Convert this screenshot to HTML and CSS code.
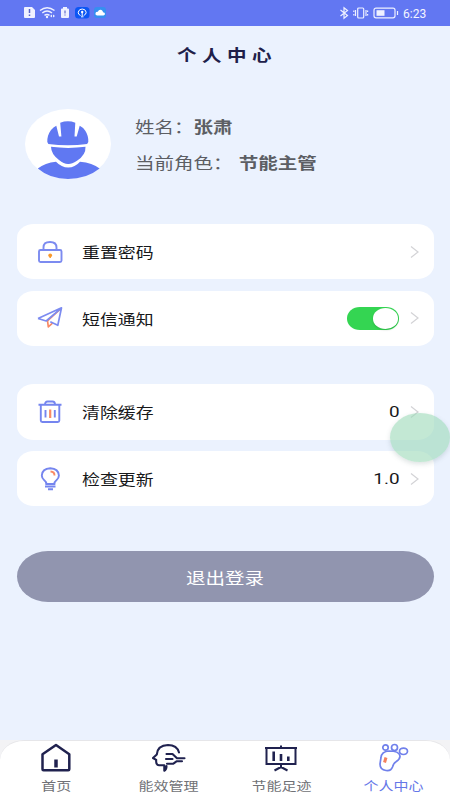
FILE: index.html
```html
<!DOCTYPE html>
<html lang="zh-CN">
<head>
<meta charset="utf-8">
<title>个人中心</title>
<link rel="stylesheet" href="styles.css">
</head>
<body>
<div class="screen">
  <header class="status">
    <svg class="status-left" width="86" height="14" viewBox="0 0 86 14">
      <path d="M1 1h7l3 3v7q0 1-1 1H1q-1 0-1-1V2q0-1 1-1z" fill="#f0f2ff"/>
      <path d="M5.5 3v4M5.500 8.500v1.500" stroke="#5964c8" stroke-width="1.500"/>
      <g fill="none" stroke="#eef1ff" stroke-width="1.500"><path d="M16 4.500Q23 -1 30.500 4.500M18.300 7Q23 3.200 28 7M20.500 9.300Q23 7.500 25.500 9.300"/></g>
      <circle cx="23" cy="11" r="1.200" fill="#eef1ff"/><path d="M26 10l2-1.500v3zM31 10l-2-1.500v3z" fill="#eef1ff"/>
      <path d="M39 1h4v1.500h1q1 0 1 1V11q0 1-1 1h-6q-1 0-1-1V3.500q0-1 1-1h1z" fill="#eef1ff"/>
      <path d="M41 4.500v3M41 8.500v1" stroke="#626ccc" stroke-width="1.200"/>
      <rect x="51" y="1" width="14.500" height="11.500" rx="3.500" fill="#0b56f4"/>
      <path d="M56.500 9.500Q54 8.500 54.200 6.200 55 3 58.200 3q3.300 0 4 3.200 0 2.300-2.500 3.300M57 10.800h2.500M58.200 6v4" fill="none" stroke="#fff" stroke-width="1"/><circle cx="58.200" cy="6" r="1.200" fill="#fff"/>
      <rect x="70" y="1" width="12" height="11" rx="3" fill="#368ff0"/>
      <path d="M73 9.500q-2-.5-1.500-2.500.6-1.300 2.300-1.200Q75 3 77.500 4q1.500.7 1.500 2.200 2 .2 2 1.800-.2 1.300-1.600 1.500z" fill="#fff"/>
    </svg>
    <div class="status-right">
      <svg width="62" height="14" viewBox="0 0 62 14" fill="none" stroke="#eef1ff" stroke-width="1.200">
        <path d="M1.500 4l7 5.500L5 12.300V1.700l3.500 2.800L1.500 10"/>
        <rect x="18.700" y="2" width="6" height="10" rx="1"/><path d="M16.500 4v6M27 4v6M14.800 4.500v1.500M14.800 8v1.500M28.600 4.500v1.500M28.600 8v1.500"/>
        <rect x="35" y="2.200" width="21" height="9.600" rx="2"/><rect x="37.500" y="4.200" width="8" height="5.600" fill="#eef1ff" stroke="none"/><path d="M58.500 5v4"/>
      </svg>
      <span class="clock">6:23</span>
    </div>
  </header>

  <h1 class="title"><span>个人中心</span></h1>

  <section class="profile">
    <svg class="avatar" width="86" height="70" viewBox="0 0 86 70">
      <ellipse cx="43" cy="35" rx="43" ry="35" fill="#fff"/>
      <g fill="#6078f2">
        <path d="M22.300 33Q22 26.500 26 21q2.400-3 5.300-4.200L34 27.500h2.400L35.200 13.700Q43 10.800 50.300 13.700L49.500 27.500h2.200l3-10.700q3.300 1.500 5.600 5 3.300 5 3 11.200l-1.200 2Q43 37.500 23.400 35z"/>
        <path d="M26 37.800Q43 40 60.500 37.800q.5 8.200-8.500 14Q46 55.500 43 55q-4.200-.2-9-4-8-6-8-13.200z"/>
        <path d="M12.800 59.500Q20 53.800 31 52.800q5.500 5.800 12.200 5.800T55 52.800q12.500 1 19.600 6.700Q61.500 70 43 70 25 70 12.800 59.500z"/>
      </g>
    </svg>
    <div class="info">
      <p><span class="wide">姓名：<b>张肃</b></span></p>
      <p><span class="wide">当前角色：<b class="role">节能主管</b></span></p>
    </div>
  </section>

  <main class="settings">
    <div class="group">
      <div class="row">
        <svg class="icon" width="28" height="26" viewBox="0 0 28 26" fill="none" stroke="#7c8bf0" stroke-width="1.900">
          <rect x="3" y="11" width="22.500" height="12" rx="1.500"/><path d="M7.500 11V8.500q0-5.500 6.500-5.500t6.500 5.500V11"/><circle cx="14.200" cy="16.300" r="1.900" fill="#f99a2c" stroke="none"/><path d="M14.200 16v3" stroke="#f99a2c" stroke-width="1.500"/>
        </svg>
        <span class="label wide">重置密码</span>
        <svg class="chevron" width="9" height="14" viewBox="0 0 9 14"><path d="M1 1.500l7 5.500-7 5.500"/></svg>
      </div>
      <div class="row">
        <svg class="icon" width="28" height="26" viewBox="0 0 28 26" fill="none" stroke-width="1.700" stroke-linejoin="round">
          <path d="M11.500 15.500l.8 6.300 4.200-3.600M25 3.500L12 15.500" stroke="#f98a65"/><path d="M2 13.500L25.500 2.800l-3.700 17.500-7.500-3.500M2 13.500l8.200 2.500L25.500 2.800" stroke="#7c8bf0"/>
        </svg>
        <span class="label wide">短信通知</span>
        <span class="switch"><i></i></span>
        <svg class="chevron" width="9" height="14" viewBox="0 0 9 14"><path d="M1 1.500l7 5.500-7 5.500"/></svg>
      </div>
    </div>
    <div class="group">
      <div class="row">
        <svg class="icon" width="28" height="26" viewBox="0 0 28 26" fill="none" stroke="#7585ef" stroke-width="1.900">
          <path d="M2.500 5.800h23M9 5.500q0-3 2.500-3h5q2.500 0 2.500 3M4.800 6v15.500q0 1.500 1.500 1.500h15.500q1.500 0 1.500-1.500V6M9.500 11v7.500M18.800 11v7.500"/><path d="M14.200 10.500v8.500" stroke="#f98a65" stroke-width="2.200"/>
        </svg>
        <span class="label wide">清除缓存</span>
        <span class="value wide">0</span>
        <svg class="chevron" width="9" height="14" viewBox="0 0 9 14"><path d="M1 1.500l7 5.500-7 5.500"/></svg>
      </div>
      <div class="row">
        <svg class="icon" width="28" height="26" viewBox="0 0 28 26" fill="none" stroke="#7585ef" stroke-width="1.900">
          <path d="M10.300 18q0-2.300-2-3.800Q5.800 12.200 5.800 9.500q.4-6.900 8.500-7.200 8.200.3 8.600 7.200 0 2.700-2.500 4.700-2 1.500-2 3.800zM9 20.500h10.500M12 23.300h5"/><path d="M14.500 5.500q4 .2 4 4" stroke="#f98a65"/>
        </svg>
        <span class="label wide">检查更新</span>
        <span class="value wide">1.0</span>
        <svg class="chevron" width="9" height="14" viewBox="0 0 9 14"><path d="M1 1.500l7 5.500-7 5.500"/></svg>
      </div>
    </div>
  </main>

  <button class="logout"><span>退出登录</span></button>

  <div class="float-ball"></div>

  <div class="tabs-wrap">
    <nav class="tabs">
      <a class="tab">
        <svg width="34" height="30" viewBox="0 0 34 30" fill="none" stroke="#20224f" stroke-width="2.500" stroke-linejoin="round"><path d="M3.500 11.300L17 2l13.300 9.300v15q0 1-1 1H4.500q-1 0-1-1z"/><path d="M17 16.500v8" stroke-width="3.500"/></svg>
        <span>首页</span>
      </a>
      <a class="tab">
        <svg width="34" height="30" viewBox="0 0 34 30" fill="none" stroke="#20224f" stroke-width="2.100" stroke-linecap="round" stroke-linejoin="round"><path d="M27 9.500Q25 2 16 2 5.500 2.300 4.800 11.500L1 15l3.200 1.800q-.5 5.200 2.800 5.500h5.300v5.500q2.200-1.300 2.200-4.800M14.500 11h6l4.500 4.300h7.500M14 16h6.500M15 20.800h6l3.500-2.500h5.500"/></svg>
        <span>能效管理</span>
      </a>
      <a class="tab">
        <svg width="34" height="30" viewBox="0 0 34 30" fill="none" stroke="#20224f" stroke-width="2"><path d="M1 5h32M2.500 5v16h29V5M17 2.500V5M17 21v3M10.500 27.500L17 24l6.500 3.500"/><path d="M9.700 8.500V18M17 11v7M24.300 13.500V18" stroke-width="2.600"/></svg>
        <span>节能足迹</span>
      </a>
      <a class="tab active">
        <svg width="34" height="30" viewBox="0 0 34 30" fill="none" stroke="#7080eb" stroke-width="1.700"><path d="M4 14.500Q4.500 8.500 12 8q10.500 0 11 5 .2 3-4 5.800-2.500 1.500-3.500 5.200-1.500 4.300-6.500 3.500-6-.7-6-6.500z"/><circle cx="8.500" cy="4.500" r="2.700"/><circle cx="17.500" cy="4.500" r="3"/><ellipse cx="26.500" cy="8.300" rx="4" ry="3.200"/><path d="M9 14.500L7.500 19.500" stroke="#f4805e" stroke-width="3"/></svg>
        <span>个人中心</span>
      </a>
    </nav>
  </div>
</div>
</body>
</html>
```
FILE: styles.css
```css
* { box-sizing: border-box; }
body { margin: 0; font-family: Roboto, "Noto Sans CJK SC", sans-serif; }
h1, p { margin: 0; }

.screen {
  position: relative;
  width: 450px;
  height: 800px;
  overflow: hidden;
  display: flex;
  flex-direction: column;
  background: #ebf2fe;
}

.status {
  height: 26px;
  flex: none;
  display: flex;
  justify-content: space-between;
  align-items: center;
  padding: 0 23px 0 24px;
  background: #6277f2;
}
.status-left, .status-right svg { display: block; }
.status-right { display: flex; align-items: center; gap: 2px; }
.clock { width: 24px; font-size: 12px; line-height: 14px; color: #f3f5ff; white-space: nowrap; margin-top: 2px; }

.title {
  height: 60px;
  flex: none;
  text-align: center;
  font-size: 16px;
  line-height: 60px;
  font-weight: 700;
  color: #20204a;
}
.title span { display: inline-block; letter-spacing: 4.500px; margin-right: -4.500px; transform: scaleX(1.220); }

.wide { display: inline-block; transform: scaleX(1.220); transform-origin: left center; white-space: nowrap; }

.profile { display: flex; gap: 24px; margin: 23px 0 0 25px; height: 70px; flex: none; }
.avatar { flex: none; }
.info { font-size: 16px; line-height: 36px; color: #5c5e64; padding-top: 1px; }
.role { margin-left: 5px; }

.settings { padding: 0 16.500px 0 17px; margin-top: 45px; display: flex; flex-direction: column; gap: 38.500px; }
.group { display: flex; flex-direction: column; gap: 11.500px; }
.row {
  height: 55.200px;
  display: flex;
  align-items: center;
  padding: 0 15px 0 19px;
  border-radius: 17px / 14px;
  background: #fff;
  font-size: 14.700px;
  color: #17181a;
}
.icon { flex: none; margin-right: 18px; }
.label { flex: 1; }
.value { transform-origin: right center; margin-right: 10px; font-size: 15.500px; }
.chevron { flex: none; fill: none; stroke: #d3d3d6; stroke-width: 1.200; }

.switch { width: 52px; height: 22.500px; margin-right: 11px; padding: 1px; display: flex; justify-content: flex-end; border-radius: 13px / 11.250px; background: #34d552; }
.switch i { width: 25px; height: 20.500px; border-radius: 50%; background: #fff; box-shadow: 0 1px 2px rgba(0, 60, 10, .2); }

.logout {
  height: 51px;
  flex: none;
  margin: 45px 16.500px 0 17px;
  padding: 0;
  border: 0;
  border-radius: 31px / 25.500px;
  background: #9195af;
  color: #fff;
  font: 16px "Noto Sans CJK SC", sans-serif;
}
.logout span { display: inline-block; transform: scaleX(1.220); }

.float-ball {
  position: absolute;
  left: 390px;
  top: 413px;
  width: 60px;
  height: 49px;
  border-radius: 50%;
  background: rgba(155, 217, 183, .6);
  box-shadow: 0 2px 5px rgba(80, 110, 110, .2);
}

.tabs-wrap { margin-top: auto; background: #f3f3f5; flex: none; }
.tabs { height: 60px; display: flex; background: #fff; border-top: 1px solid #e6e6e9; border-radius: 24px 24px 0 0 / 20px 20px 0 0; }
.tab { flex: 1; display: flex; flex-direction: column; align-items: center; padding-top: 2px; color: #707176; font-size: 12.300px; line-height: 18px; }
.tab svg { display: block; flex: none; }
.tab span { display: block; margin-top: 5px; transform: scaleX(1.220); white-space: nowrap; }
.tab.active { color: #6577e8; }
```
